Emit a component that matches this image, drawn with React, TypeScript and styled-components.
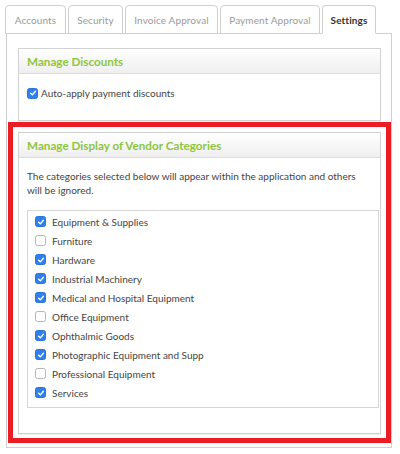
import React from 'react';
import styled, { createGlobalStyle } from 'styled-components';

const GlobalStyle = createGlobalStyle`
  html, body {
    margin: 0;
    padding: 0;
    background: #ffffff;
  }
  body {
    font-family: Lato, 'Open Sans', 'Liberation Sans', sans-serif;
    color: #444;
  }
`;

const categories = [
  { name: 'Equipment & Supplies', checked: true },
  { name: 'Furniture', checked: false },
  { name: 'Hardware', checked: true },
  { name: 'Industrial Machinery', checked: true },
  { name: 'Medical and Hospital Equipment', checked: true },
  { name: 'Office Equipment', checked: false },
  { name: 'Ophthalmic Goods', checked: true },
  { name: 'Photographic Equipment and Supp', checked: true },
  { name: 'Professional Equipment', checked: false },
  { name: 'Services', checked: true },
];

const tabs = [
  { label: 'Accounts', width: 61 },
  { label: 'Security', width: 55 },
  { label: 'Invoice Approval', width: 93 },
  { label: 'Payment Approval', width: 100 },
  { label: 'Settings', width: 54 },
];

function CheckBox({ checked }: { checked: boolean }) {
  return (
    <Box $checked={checked}>
      {checked && (
        <svg width='8' height='8' viewBox='0 0 10 10'>
          <path d='M2 5.2 L4.2 7.3 L8 2.8' fill='none' stroke='#fff' strokeWidth='1.8' strokeLinecap='round' strokeLinejoin='round' />
        </svg>
      )}
    </Box>
  );
}

function App() {
  return (
    <Page>
      <GlobalStyle />
      <TabBar>
        {tabs.map((t) => (
          <Tab key={t.label} $active={t.label === 'Settings'} $width={t.width}>
            {t.label}
          </Tab>
        ))}
      </TabBar>
      <Panel>
        <Section>
          <SectionHeader>Manage Discounts</SectionHeader>
          <SectionBody className='discounts'>
            <Row>
              <CheckBox checked />
              <span>Auto-apply payment discounts</span>
            </Row>
          </SectionBody>
        </Section>

        <Highlight>
          <Section>
            <SectionHeader>Manage Display of Vendor Categories</SectionHeader>
            <SectionBody className='vendors'>
              <Description>
                The categories selected below will appear within the application and others will be ignored.
              </Description>
              <List>
                {categories.map((c) => (
                  <ListRow key={c.name}>
                    <CheckBox checked={c.checked} />
                    <span>{c.name}</span>
                  </ListRow>
                ))}
              </List>
            </SectionBody>
          </Section>
        </Highlight>
      </Panel>
    </Page>
  );
}

const Page = styled.div`
  width: 400px;
  height: 454px;
  padding: 5px 8px 0 5px;
  box-sizing: border-box;
`;

const TabBar = styled.div`
  display: flex;
  align-items: flex-end;
  gap: 2px;
  height: 28px;
`;

const Tab = styled.div<{ $active: boolean; $width: number }>`
  width: ${(p) => p.$width}px;
  flex-shrink: 0;
  height: 29px;
  box-sizing: border-box;
  display: flex;
  align-items: center;
  justify-content: center;
  white-space: nowrap;
  font-size: 10px;
  letter-spacing: 0.1px;
  color: ${(p) => (p.$active ? '#333' : '#9a9a9a')};
  font-weight: ${(p) => (p.$active ? 700 : 400)};
  background: #fff;
  border: 1px solid #cfcfcf;
  border-bottom-color: ${(p) => (p.$active ? '#fff' : '#cfcfcf')};
  border-radius: 4px 4px 0 0;
  position: relative;
  z-index: 1;
  margin-bottom: -1px;
`;

const Panel = styled.div`
  margin-left: 1px;
  border: 1px solid #d0d0d0;
  height: 415px;
  box-sizing: border-box;
  padding: 14px 10px 0 11px;
`;

const Section = styled.div`
  border: 1px solid #d2d2d2;
  background: #fff;
  box-shadow: 0 1px 1px rgba(0, 0, 0, 0.06);
`;

const SectionHeader = styled.div`
  height: 24px;
  display: flex;
  align-items: center;
  padding-left: 8px;
  font-size: 11.7px;
  font-weight: 700;
  color: #8cc63e;
  background: linear-gradient(#ffffff, #efefef);
  border-bottom: 1px solid #dcdcdc;
`;

const SectionBody = styled.div`
  &.discounts {
    padding: 12px 8px 20px 8px;
  }
  &.vendors {
    padding: 12px 0 25px 8px;
  }
`;

const Row = styled.label`
  display: flex;
  align-items: center;
  gap: 0;
  font-size: 10px;
  color: #444;
  height: 14px;

  span:last-child {
    margin-left: 1px;
  }
`;

const Box = styled.span<{ $checked: boolean }>`
  width: 11px;
  height: 11px;
  margin-right: 2px;
  box-sizing: border-box;
  border-radius: 2.5px;
  display: inline-flex;
  align-items: center;
  justify-content: center;
  flex-shrink: 0;
  background: ${(p) => (p.$checked ? '#2f80ed' : '#fff')};
  border: 1px solid ${(p) => (p.$checked ? '#2a74d8' : '#b5b5b5')};
`;

const Highlight = styled.div`
  margin: 1px -10px 0 -10px;
  border: 5px solid #ec1c24;
  padding: 5px 5px 4px 5px;
`;

const Description = styled.p`
  margin: 0 18px 13px 0;
  font-size: 10px;
  line-height: 13.5px;
  color: #444;
`;

const List = styled.div`
  border: 1px solid #d6d6d6;
  padding: 1px 0 5px 7px;
  margin-right: 1px;
`;

const ListRow = styled.label`
  display: flex;
  align-items: center;
  gap: 4px;
  height: 19px;
  font-size: 10px;
  color: #444;
`;

export default App;
